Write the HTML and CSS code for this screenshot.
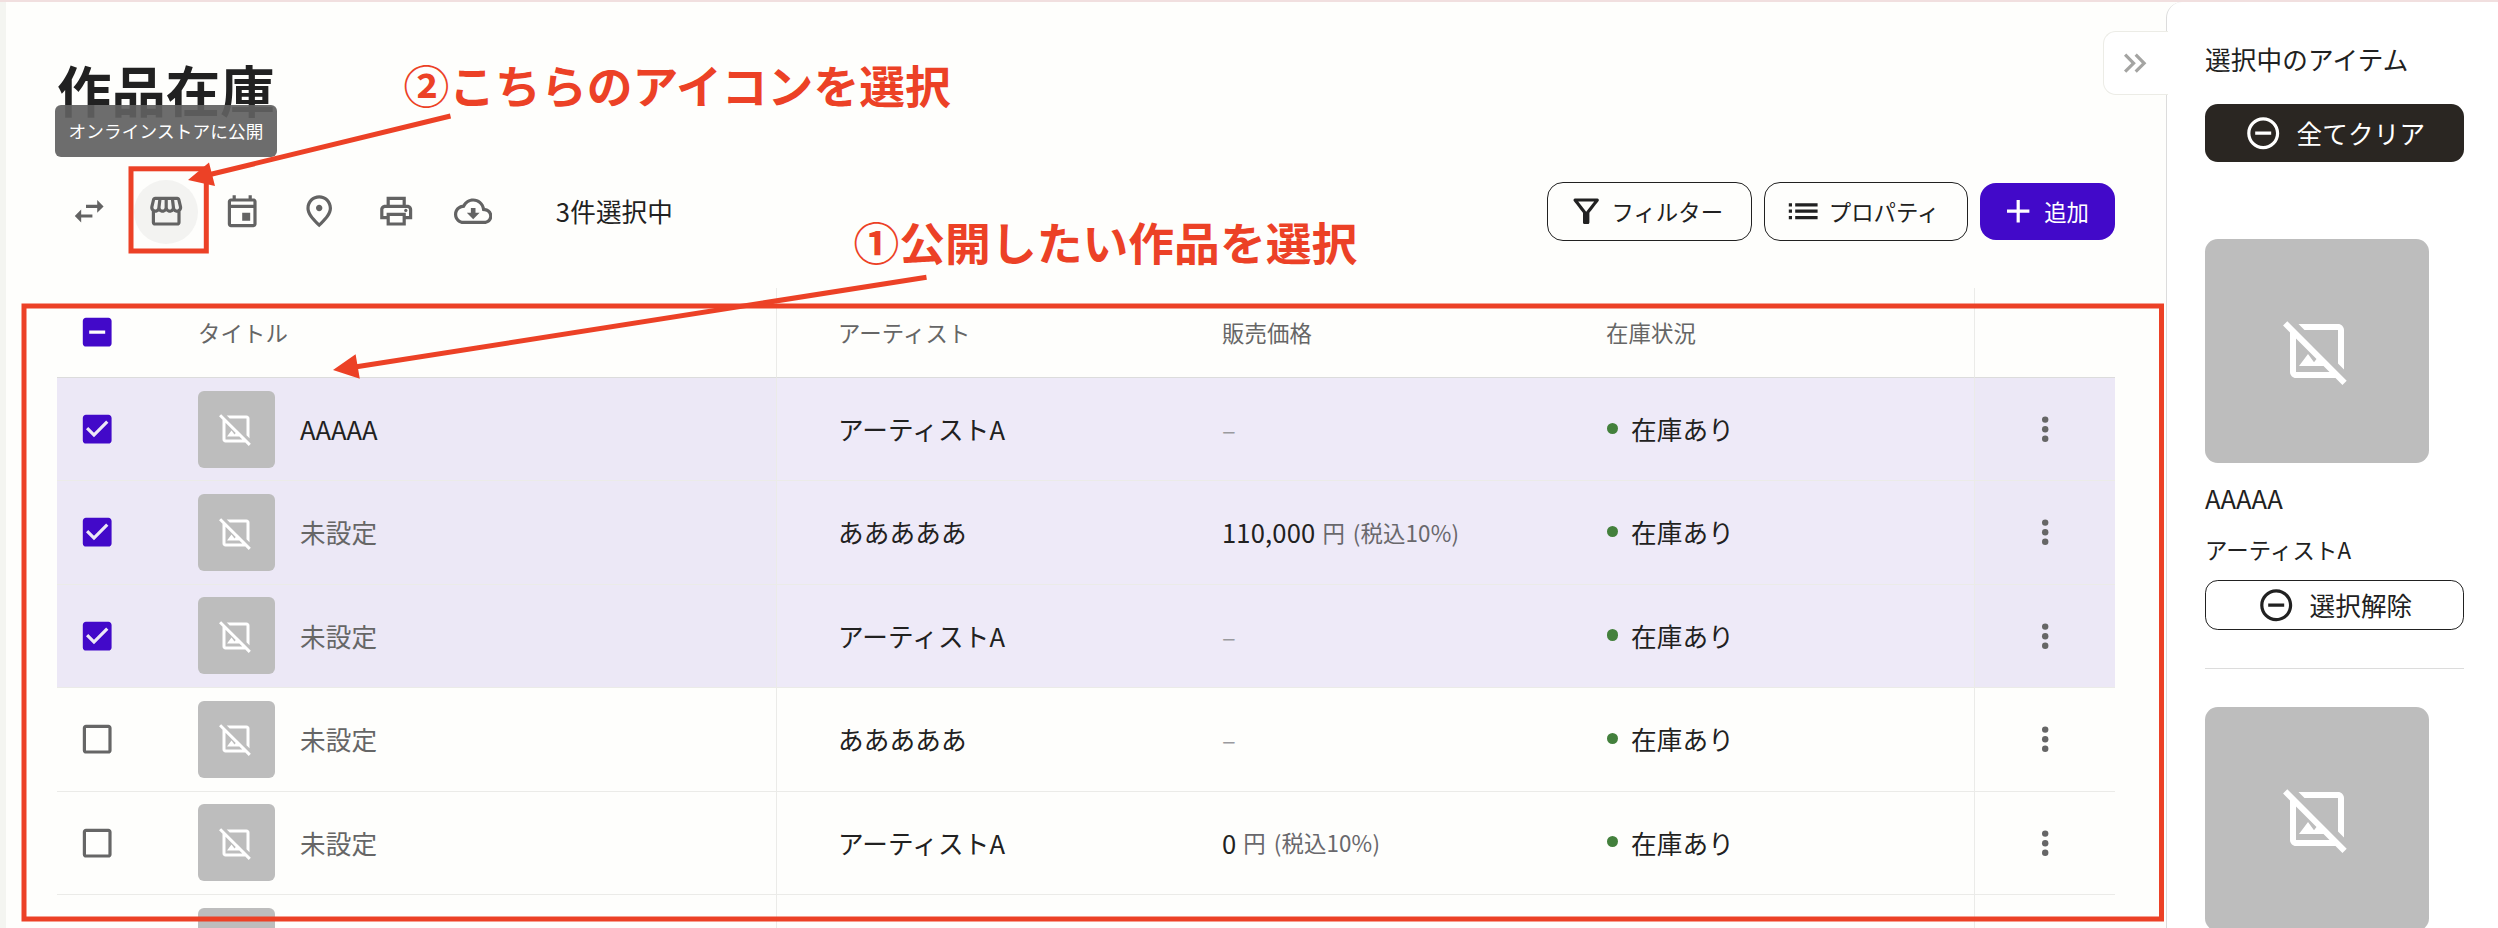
FILE: index.html
```html
<!DOCTYPE html>
<html lang="ja">
<head>
<meta charset="utf-8">
<title>作品在庫</title>
<link rel="stylesheet" href="styles.css">
</head>
<body>
<svg class="sprite" width="0" height="0">
  <symbol id="noimage" viewBox="0 0 24 24"><path d="M21.9 21.9 2.1 2.1.69 3.51 3 5.83V19c0 1.1.9 2 2 2h13.17l2.31 2.31 1.42-1.41zM5 19V7.83l6.84 6.84-.84 1.05L9 13l-3 4h8.17l2 2H5zM7.83 5l-2-2H19c1.1 0 2 .9 2 2v13.17l-2-2V5H7.83z"/></symbol>
  <symbol id="more" viewBox="0 0 24 24"><circle cx="12" cy="6" r="2"/><circle cx="12" cy="12" r="2"/><circle cx="12" cy="18" r="2"/></symbol>
  <symbol id="checked" viewBox="0 0 24 24"><path d="M19 3H5c-1.11 0-2 .9-2 2v14c0 1.1.89 2 2 2h14c1.11 0 2-.9 2-2V5c0-1.1-.89-2-2-2zm-9 14-5-5 1.41-1.41L10 14.17l7.59-7.59L19 8l-9 9z"/></symbol>
  <symbol id="unchecked" viewBox="0 0 24 24"><path d="M19 5v14H5V5h14m0-2H5c-1.1 0-2 .9-2 2v14c0 1.1.9 2 2 2h14c1.1 0 2-.9 2-2V5c0-1.1-.9-2-2-2z"/></symbol>
  <symbol id="minus" viewBox="0 0 24 24"><path d="M7 11v2h10v-2H7zm5-9C6.48 2 2 6.48 2 12s4.48 10 10 10 10-4.48 10-10S17.52 2 12 2zm0 18c-4.41 0-8-3.59-8-8s3.59-8 8-8 8 3.59 8 8-3.59 8-8 8z"/></symbol>
</svg>

<div class="app">
  <main class="main">
    <h1 class="title">作品在庫</h1>
    <div class="toolbar">
      <div class="actions">
        <span class="icon-btn"><svg class="icon" viewBox="0 0 24 24"><path d="M6.99 11 3 15l3.99 4v-3H14v-2H6.99v-3zM21 9l-3.99-4v3H10v2h7.01v3L21 9z"/></svg></span>
        <span class="icon-btn icon-btn-active"><svg class="icon" viewBox="0 0 24 24"><path d="m21.9 8.89-1.05-4.37c-.22-.9-1-1.52-1.91-1.52H5.05c-.9 0-1.69.63-1.9 1.52L2.1 8.89c-.24 1.02-.02 2.06.62 2.88.08.11.19.19.28.29V19c0 1.1.9 2 2 2h14c1.1 0 2-.9 2-2v-6.94c.09-.09.2-.18.28-.28.64-.82.87-1.87.62-2.89zm-2.99-3.9 1.05 4.37c.1.42.01.84-.25 1.17-.14.18-.44.47-.94.47-.61 0-1.14-.49-1.21-1.14L16.98 5l1.93-.01zM13 5h1.96l.54 4.52c.05.39-.07.78-.33 1.07-.22.26-.54.41-.95.41-.67 0-1.22-.59-1.22-1.31V5zM8.49 9.52 9.04 5H11v4.69c0 .72-.55 1.31-1.29 1.31-.34 0-.65-.15-.89-.41-.25-.29-.37-.68-.33-1.07zm-4.45-.16L5.05 5h1.97l-.58 4.86c-.08.65-.6 1.14-1.21 1.14-.49 0-.8-.29-.93-.47-.27-.32-.36-.75-.26-1.17zM5 19v-6.03c.08.01.15.03.23.03.87 0 1.66-.36 2.24-.95.6.6 1.4.95 2.31.95.87 0 1.65-.36 2.23-.93.59.57 1.39.93 2.29.93.84 0 1.64-.35 2.24-.95.58.59 1.37.95 2.24.95.08 0 .15-.02.23-.03V19H5z"/></svg></span>
        <span class="icon-btn"><svg class="icon" viewBox="0 0 24 24"><path d="M19 4h-1V2h-2v2H8V2H6v2H5c-1.11 0-1.99.9-1.99 2L3 20c0 1.1.89 2 2 2h14c1.1 0 2-.9 2-2V6c0-1.1-.9-2-2-2zm0 16H5V10h14v10zm0-12H5V6h14v2zm-7 5h5v5h-5v-5z"/></svg></span>
        <span class="icon-btn"><svg class="icon" viewBox="0 0 24 24"><path d="M12 12c-1.1 0-2-.9-2-2s.9-2 2-2 2 .9 2 2-.9 2-2 2zm6-1.8C18 6.57 15.35 4 12 4s-6 2.57-6 6.2c0 2.34 1.95 5.44 6 9.14 4.05-3.7 6-6.8 6-9.14zM12 2c4.2 0 8 3.22 8 8.2 0 3.32-2.67 7.25-8 11.8-5.33-4.55-8-8.48-8-11.8C4 5.22 7.8 2 12 2z"/></svg></span>
        <span class="icon-btn"><svg class="icon" viewBox="0 0 24 24"><path d="M19 8h-1V3H6v5H5c-1.66 0-3 1.34-3 3v6h4v4h12v-4h4v-6c0-1.66-1.34-3-3-3zM8 5h8v3H8V5zm8 12v2H8v-4h8v2zm2-2v-2H6v2H4v-4c0-.55.45-1 1-1h14c.55 0 1 .45 1 1v4h-2z"/><circle cx="18" cy="11.5" r="1"/></svg></span>
        <span class="icon-btn"><svg class="icon" viewBox="0 0 24 24"><path d="M19.35 10.04C18.67 6.59 15.64 4 12 4 9.11 4 6.6 5.64 5.35 8.04 2.34 8.36 0 10.91 0 14c0 3.31 2.69 6 6 6h13c2.76 0 5-2.24 5-5 0-2.64-2.05-4.78-4.65-4.96zM19 18H6c-2.21 0-4-1.79-4-4 0-2.05 1.53-3.76 3.56-3.97l1.07-.11.5-.95C8.08 7.14 9.94 6 12 6c2.62 0 4.88 1.86 5.39 4.43l.3 1.5 1.53.11c1.56.1 2.78 1.41 2.78 2.96 0 1.65-1.35 3-3 3zm-5.55-8h-2.9v3H8l4 4 4-4h-2.55z"/></svg></span>
        <span class="count">3件選択中</span>
      </div>
      <div class="buttons">
        <span class="btn"><svg class="icon" viewBox="0 0 24 24"><path d="M7 6h10l-5.01 6.3L7 6zm-2.75-.39C6.27 8.2 10 13 10 13v6c0 .55.45 1 1 1h2c.55 0 1-.45 1-1v-6s3.72-4.8 5.74-7.39c.51-.66.04-1.61-.79-1.61H5.04c-.83 0-1.3.95-.79 1.61z"/></svg>フィルター</span>
        <span class="btn"><svg class="icon" viewBox="0 0 24 24"><path d="M3 13h2v-2H3v2zm0 4h2v-2H3v2zm0-8h2V7H3v2zm4 4h14v-2H7v2zm0 4h14v-2H7v2zM7 7v2h14V7H7z"/></svg>プロパティ</span>
        <span class="btn btn-primary"><svg class="icon" viewBox="0 0 24 24"><path d="M19 13h-6v6h-2v-6H5v-2h6V5h2v6h6v2z"/></svg>追加</span>
      </div>
    </div>

    <div class="table">
      <div class="row head">
        <div class="cell cell-title"><svg class="icon check on" viewBox="0 0 24 24"><path d="M19 3H5c-1.1 0-2 .9-2 2v14c0 1.1.9 2 2 2h14c1.1 0 2-.9 2-2V5c0-1.1-.9-2-2-2zm-2 10H7v-2h10v2z"/></svg><span>タイトル</span></div>
        <div class="cell cell-artist">アーティスト</div><div class="cell">販売価格</div><div class="cell">在庫状況</div><div class="cell cell-more"></div>
      </div>
      <div class="row selected">
        <div class="cell cell-title"><svg class="icon check on"><use href="#checked"/></svg><span class="thumb"><svg><use href="#noimage"/></svg></span><span>AAAAA</span></div>
        <div class="cell cell-artist">アーティストA</div><div class="cell"><span class="dash">–</span></div><div class="cell"><i class="dot"></i>在庫あり</div>
        <div class="cell cell-more"><svg class="icon"><use href="#more"/></svg></div>
      </div>
      <div class="row selected">
        <div class="cell cell-title"><svg class="icon check on"><use href="#checked"/></svg><span class="thumb"><svg><use href="#noimage"/></svg></span><span class="muted">未設定</span></div>
        <div class="cell cell-artist">あああああ</div><div class="cell">110,000<span class="unit">円 (税込10%)</span></div><div class="cell"><i class="dot"></i>在庫あり</div>
        <div class="cell cell-more"><svg class="icon"><use href="#more"/></svg></div>
      </div>
      <div class="row selected">
        <div class="cell cell-title"><svg class="icon check on"><use href="#checked"/></svg><span class="thumb"><svg><use href="#noimage"/></svg></span><span class="muted">未設定</span></div>
        <div class="cell cell-artist">アーティストA</div><div class="cell"><span class="dash">–</span></div><div class="cell"><i class="dot"></i>在庫あり</div>
        <div class="cell cell-more"><svg class="icon"><use href="#more"/></svg></div>
      </div>
      <div class="row">
        <div class="cell cell-title"><svg class="icon check"><use href="#unchecked"/></svg><span class="thumb"><svg><use href="#noimage"/></svg></span><span class="muted">未設定</span></div>
        <div class="cell cell-artist">あああああ</div><div class="cell"><span class="dash">–</span></div><div class="cell"><i class="dot"></i>在庫あり</div>
        <div class="cell cell-more"><svg class="icon"><use href="#more"/></svg></div>
      </div>
      <div class="row">
        <div class="cell cell-title"><svg class="icon check"><use href="#unchecked"/></svg><span class="thumb"><svg><use href="#noimage"/></svg></span><span class="muted">未設定</span></div>
        <div class="cell cell-artist">アーティストA</div><div class="cell">0<span class="unit">円 (税込10%)</span></div><div class="cell"><i class="dot"></i>在庫あり</div>
        <div class="cell cell-more"><svg class="icon"><use href="#more"/></svg></div>
      </div>
      <div class="row">
        <div class="cell cell-title"><span class="icon check"></span><span class="thumb"></span></div>
        <div class="cell cell-artist"></div><div class="cell"></div><div class="cell"></div><div class="cell cell-more"></div>
      </div>
    </div>
  </main>

  <aside class="side">
    <div class="side-title">選択中のアイテム</div>
    <div class="side-btn clear"><svg class="icon"><use href="#minus"/></svg>全てクリア</div>
    <div class="item first">
      <div class="preview"><svg><use href="#noimage"/></svg></div>
      <div class="item-name">AAAAA</div>
      <div class="item-artist">アーティストA</div>
      <div class="side-btn remove"><svg class="icon"><use href="#minus"/></svg>選択解除</div>
    </div>
    <div class="item">
      <div class="preview"><svg><use href="#noimage"/></svg></div>
    </div>
    <div class="collapse"><svg class="icon" viewBox="0 0 24 24"><path d="M6.41 6 5 7.41 9.58 12 5 16.59 6.41 18l6-6z"/><path d="m13 6-1.41 1.41L16.17 12l-4.58 4.59L13 18l6-6z"/></svg></div>
  </aside>
</div>

<div class="tooltip">オンラインストアに公開</div>
<svg class="marks" viewBox="0 0 2498 928">
  <g class="mark-line">
    <rect x="24" y="306" width="2137.5" height="613"/>
    <rect x="131" y="168.8" width="75.3" height="82.2"/>
    <path d="M450.5 116 210 174.5M926.5 277.3 355 367"/>
  </g>
  <path class="mark-head" d="M188 180 209 162.5 215 186zM333 370 355.6 354.2 359.8 378.7z"/>
</svg>
<div class="note note-two">②こちらのアイコンを選択</div>
<div class="note note-one">①公開したい作品を選択</div>
</body>
</html>
```

FILE: styles.css
```css
* { box-sizing: border-box; }
body {
  margin: 0;
  height: 928px;
  overflow: hidden;
  position: relative;
  background: #fefefc;
  color: #212121;
  font-family: "Noto Sans CJK JP", sans-serif;
  font-size: 25.6px;
  letter-spacing: .15px;
  line-height: 1.5;
}
.sprite { position: absolute; }
.icon { width: 38.4px; height: 38.4px; flex: none; fill: currentColor; }

.app {
  display: flex;
  height: 928px;
  overflow: hidden;
  border-top: 2px solid #f1dfdf;
}
.main {
  flex: 1;
  min-width: 0;
  padding: 47px 51px 0;
  border-left: 6px solid #f4f5f1;
}
.title {
  margin: 0 0 50.5px;
  height: 80px;
  line-height: 80px;
  font-size: 54.4px;
  font-weight: 700;
  letter-spacing: 0;
}
.toolbar, .actions, .buttons { display: flex; align-items: center; }
.toolbar { justify-content: space-between; height: 64px; }
.actions { gap: 12.8px; }
.icon-btn {
  display: flex;
  align-items: center;
  justify-content: center;
  width: 64px;
  height: 64px;
  border-radius: 50%;
  color: #636363;
}
.icon-btn-active { background: #f3f3f1; }
.count { margin-left: 38px; }
.buttons { gap: 12px; letter-spacing: 0; }
.btn {
  display: flex;
  align-items: center;
  gap: 6.4px;
  height: 59px;
  padding: 0 28px 0 19px;
  border: 1px solid #212121;
  border-radius: 16px;
  font-size: 22.4px;
}
.btn-primary {
  height: 57px;
  padding: 0 26px 0 19px;
  border: 0;
  background: #4209c9;
  color: #fff;
}

.table { margin-top: 44.5px; }
.row {
  display: grid;
  grid-template-columns: 720px 445px 384px 1fr 141px;
  height: 103.4px;
}
.cell {
  display: flex;
  align-items: center;
  border-bottom: 1px solid #ebebe8;
}
.cell-title {
  padding-left: 21px;
  border-right: 1px solid #ebebe8;
}
.cell-artist { padding-left: 61px; }
.cell-more {
  justify-content: center;
  border-left: 1px solid #ebebe8;
  color: #666;
}
.head { height: 90px; font-size: 22.4px; color: #666; }
.head .cell { border-bottom-color: #dcdcdc; }
.selected { background: #eeeaf8; }
.selected .cell-title, .selected .cell-more { background: #ece8f6; }
.check { margin-right: 81.6px; color: #666; }
.check.on { color: #4209c9; }
.thumb {
  display: flex;
  align-items: center;
  justify-content: center;
  width: 77px;
  height: 77px;
  margin-right: 25px;
  border-radius: 6px;
  background: #bdbdbd;
  fill: #fff;
}
.thumb svg { width: 36px; height: 36px; }
.muted { color: #666; }
.dash { color: #9a9a9e; font-size: 25.6px; }
.unit { margin-left: 7px; font-size: 22.4px; word-spacing: 2.6px; color: #69686c; }
.dot {
  width: 11.2px;
  height: 11.2px;
  margin: 0 12.8px 2px 1px;
  border-radius: 50%;
  background: #43803c;
}

.side {
  position: relative;
  width: 332px;
  padding: 38px 34px 0 38px;
  border-left: 1px solid #dcdcdc;
  border-top-left-radius: 16px;
  background: #fff;
}
.side-title { height: 38px; line-height: 38px; }
.side-btn {
  display: flex;
  align-items: center;
  justify-content: center;
  gap: 14.4px;
  border-radius: 12.8px;
}
.clear {
  height: 58px;
  margin: 26px 0 77px;
  background: #2a2622;
  color: #fff;
}
.item.first {
  height: 430px;
  margin-bottom: 38px;
  border-bottom: 1px solid #dcdcdc;
}
.preview {
  display: flex;
  align-items: center;
  justify-content: center;
  width: 224px;
  height: 224px;
  border-radius: 12.8px;
  background: #bdbdbd;
  fill: #fff;
}
.preview svg { width: 72px; height: 72px; }
.item-name { margin-top: 16px; }
.item-artist { margin: 14px 0 13px; font-size: 22.4px; line-height: 36px; }
.remove { height: 50px; border: 1px solid #212121; }

/* Tab that hangs off the panel's left edge */
.collapse {
  position: absolute;
  left: -64px;
  top: 29px;
  display: flex;
  align-items: center;
  justify-content: center;
  width: 65px;
  height: 64px;
  padding-right: 1px;
  border: 1px solid #ecece6;
  border-right: 0;
  border-radius: 12.8px 0 0 12.8px;
  background: #fff;
  color: #a4a4a2;
}

.tooltip {
  position: absolute;
  left: 55px;
  top: 105px;
  width: 222px;
  height: 52px;
  border-radius: 6px;
  background: rgba(97, 97, 97, .92);
  color: #fff;
  font-size: 17.6px;
  line-height: 52px;
  text-align: center;
  white-space: nowrap;
}
.marks { position: absolute; left: 0; top: 0; width: 2498px; height: 928px; }
.mark-line { fill: none; stroke: #ec4126; stroke-width: 5; }
.mark-head { fill: #ec4126; }
.note {
  position: absolute;
  color: #ec4126;
  font-size: 45.8px;
  font-weight: 700;
  letter-spacing: 0;
  line-height: 60px;
  white-space: nowrap;
}
.note-two { left: 403.5px; top: 54px; }
.note-one { left: 853.5px; top: 211px; }
```
